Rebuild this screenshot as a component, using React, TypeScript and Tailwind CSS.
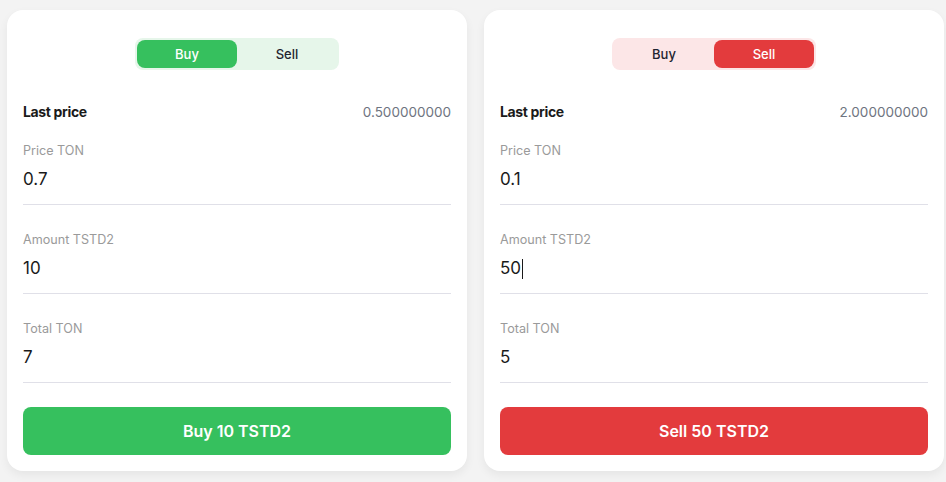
type Side = "buy" | "sell";

const fields = {
  buy: { last: "0.500000000", price: "0.7", amount: "10", total: "7" },
  sell: { last: "2.000000000", price: "0.1", amount: "50", total: "5" },
};

function Field({ label, value, caret }: { label: string; value: string; caret?: boolean }) {
  return (
    <div className="flex flex-col">
      <span className="h-5 pt-px text-[12.6px] leading-5 text-[#9a9a9a]">{label}</span>
      <div className="flex h-[45px] items-center border-b border-[#e0e0e8] pb-1 text-[17px] text-[#1a1a1a]">
        {value}
        {caret && <span className="ml-px inline-block h-5 w-px bg-[#1a1a1a]" />}
      </div>
    </div>
  );
}

function OrderCard({ side }: { side: Side }) {
  const d = fields[side];
  const isBuy = side === "buy";
  return (
    <div className="flex min-w-0 flex-1 flex-col rounded-2xl bg-white px-4 pt-7 pb-4 shadow-[0_4px_10px_rgba(0,0,0,0.06)]">
      <div className="flex justify-center">
        <div
          className={`flex h-8 w-[204px] rounded-lg p-0.5 ${isBuy ? "bg-[#e6f6ea]" : "bg-[#fce6e7]"}`}
        >
          <button
            className={`flex-1 rounded-lg pt-0.5 text-[13px] font-medium ${
              isBuy ? "bg-[#36c05e] text-white" : "text-[#1f2430]"
            }`}
          >
            Buy
          </button>
          <button
            className={`flex-1 rounded-lg pt-0.5 text-[13px] font-medium ${
              !isBuy ? "bg-[#e33b3d] text-white" : "text-[#1f2430]"
            }`}
          >
            Sell
          </button>
        </div>
      </div>

      <div className="mt-8 flex h-5 items-center justify-between">
        <span className="text-sm font-bold tracking-tight text-[#1a1a1a]">Last price</span>
        <span className="text-[13.5px] text-[#6e7480]">{d.last}</span>
      </div>

      <div className="mt-[18px] flex flex-col gap-6">
        <Field label="Price TON" value={d.price} />
        <Field label="Amount TSTD2" value={d.amount} caret={!isBuy} />
        <Field label="Total TON" value={d.total} />
      </div>

      <button
        className={`mt-6 h-12 w-full rounded-lg text-base font-semibold text-white ${
          isBuy ? "bg-[#36c05e]" : "bg-[#e33b3d]"
        }`}
      >
        {isBuy ? `Buy ${d.amount} TSTD2` : `Sell ${d.amount} TSTD2`}
      </button>
    </div>
  );
}

export default function App() {
  return (
    <main className="h-screen overflow-hidden bg-[#f3f3f3] pt-[10px] pr-[2px] pl-[7px] font-['Inter',sans-serif]">
      <div className="flex gap-[17px]">
        <OrderCard side="buy" />
        <OrderCard side="sell" />
      </div>
    </main>
  );
}
